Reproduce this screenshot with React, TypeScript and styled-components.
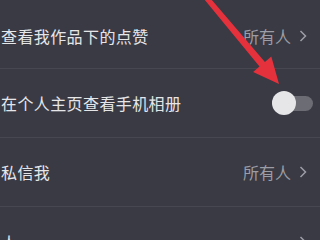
import styled, { createGlobalStyle } from "styled-components";

const GlobalStyle = createGlobalStyle`
	html, body {
		margin: 0;
		padding: 0;
		background: #393a44;
	}
	body {
		font-family: "Noto Sans CJK SC", "Noto Sans", sans-serif;
		overflow: hidden;
	}
`;

const Page = styled.div`
	position: relative;
	width: 320px;
	height: 240px;
	overflow: hidden;
	background: #393a44;
`;

const List = styled.div`
	display: flex;
	flex-direction: column;
`;

const Row = styled.div<{ $shift?: number }>`
	display: flex;
	align-items: center;
	justify-content: space-between;
	box-sizing: border-box;
	height: 69px;
	padding: ${(p) => p.$shift ?? 0}px 7px 0 1px;
	border-bottom: 1px solid #464751;
`;

const Label = styled.span`
	color: #e6e6e9;
	font-size: 16px;
	letter-spacing: 0.4px;
`;

const Value = styled.div`
	display: flex;
	align-items: center;
	gap: 8px;
	margin-right: 6px;
	color: #9c9da5;
	font-size: 16px;
`;

const Chevron = () => (
	<svg width="8" height="12" viewBox="0 0 8 12">
		<path d="M1.5 1 L6.5 6 L1.5 11" fill="none" stroke="#9c9da5" strokeWidth="1.5" />
	</svg>
);

const Toggle = styled.div`
	position: relative;
	display: flex;
	align-items: center;
	width: 41px;
	height: 24px;

	&::before {
		content: "";
		position: absolute;
		left: 0;
		right: 0;
		top: 5px;
		height: 15px;
		border-radius: 8px;
		background: #6b6c74;
	}
`;

const Knob = styled.div`
	position: relative;
	width: 24px;
	height: 24px;
	border-radius: 50%;
	background: #e6e6e9;
`;

const Overlay = styled.svg`
	position: absolute;
	left: 0;
	top: 0;
	pointer-events: none;
`;

export default function App() {
	return (
		<Page>
			<GlobalStyle />
			<List>
				<Row $shift={4}>
					<Label>查看我作品下的点赞</Label>
					<Value>
						所有人
						<Chevron />
					</Value>
				</Row>
				<Row>
					<Label>在个人主页查看手机相册</Label>
					<Toggle>
						<Knob />
					</Toggle>
				</Row>
				<Row>
					<Label>私信我</Label>
					<Value>
						所有人
						<Chevron />
					</Value>
				</Row>
				<Row $shift={2}>
					<Label>人</Label>
					<Value>
						<Chevron />
					</Value>
				</Row>
			</List>
			<Overlay width="320" height="240" viewBox="0 0 320 240">
				<polygon
					points="204,-1 211,-1 264.9,61.9 271.3,56.4 279,84 253.1,72 259.5,66.5"
					fill="#e5313b"
				/>
			</Overlay>
		</Page>
	);
}
